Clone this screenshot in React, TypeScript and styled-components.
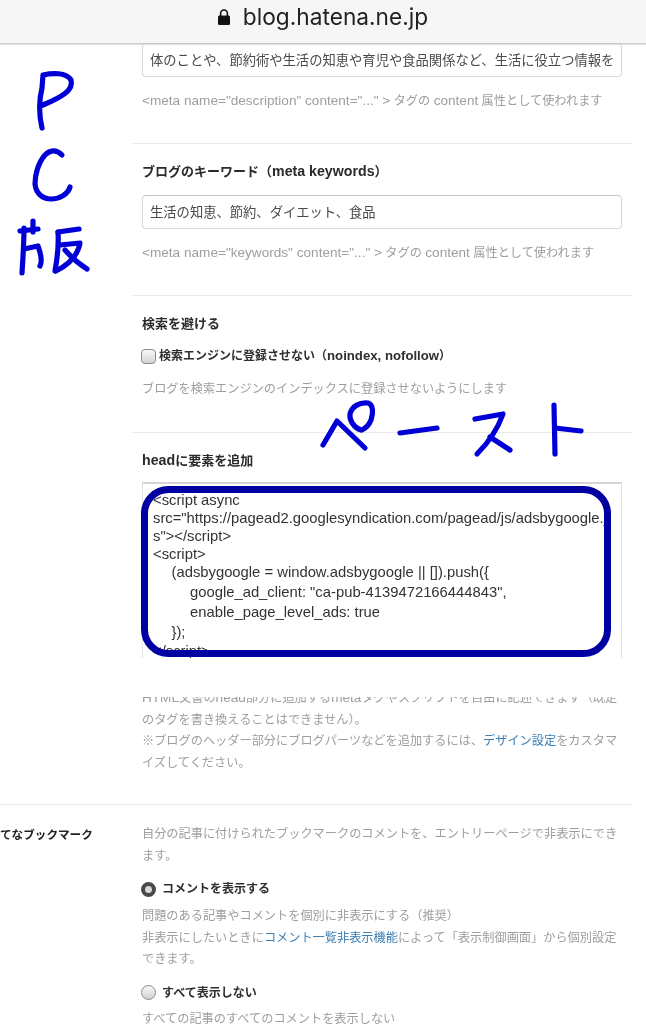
import React from "react";
import styled, { createGlobalStyle } from "styled-components";

const GlobalStyle = createGlobalStyle`
  html, body {
    margin: 0;
    padding: 0;
    background: #fff;
    overflow: hidden;
  }
  * {
    box-sizing: border-box;
  }
`;

const Page = styled.div`
  position: relative;
  width: 646px;
  height: 1024px;
  overflow: hidden;
  background: #fff;
  font-family: "Liberation Sans", "Noto Sans CJK JP", sans-serif;
  font-size: 12.2px;
  line-height: 21.5px;
  color: #9e9e9e;
  filter: blur(0.35px);
`;

const AddressBar = styled.header`
  height: 44px;
  display: flex;
  align-items: center;
  justify-content: center;
  gap: 13px;
  padding-bottom: 9px;
  background: #f6f6f6;
  border-bottom: 1px solid #cfcfcf;
  box-shadow: 0 1px 1px #e4e4e4;
`;

const Host = styled.span`
  font-family: "Inter", "Liberation Sans", sans-serif;
  font-size: 22.7px;
  line-height: 26px;
  color: #222;
`;

// latin runs are set larger than the kana around them
const Latin = styled.span<{ $size?: number }>`
  font-size: ${(p) => p.$size ?? 13.6}px;
  line-height: 0;
`;

const Section = styled.section`
  margin-left: 132px;
  width: 500px;
  padding: 18px 10px 32px;
  border-bottom: 1px solid #e9e9e9;
`;

const FirstSection = styled(Section)`
  padding-top: 0;
  margin-top: -1px;
`;

const SearchSection = styled(Section)`
  padding-bottom: 33px;
`;

const HeadSection = styled(Section)`
  padding-bottom: 31px;
  border-bottom: none;
`;

const Title = styled.h3`
  height: 18px;
  margin: 0;
  font-size: 13px;
  line-height: 20px;
  font-weight: 700;
  color: #2a2a2a;
`;

const Field = styled.div<{ $spaced?: boolean }>`
  height: 34px;
  margin-top: ${(p) => (p.$spaced ? "15px" : "0")};
  padding: 0 7px;
  border: 1px solid #d6d6d6;
  border-top-color: #c4c4c4;
  border-radius: 4px;
  font-family: "Noto Sans CJK JP", sans-serif;
  font-size: 13.3px;
  line-height: 31px;
  color: #4a4a4a;
  white-space: nowrap;
  overflow: hidden;
`;

const Hint = styled.p`
  height: 21px;
  margin: 13px 0 0;
  line-height: 23px;
  white-space: nowrap;
`;

const CheckRow = styled.label<{ $top: number }>`
  display: flex;
  align-items: center;
  height: 18px;
  margin-top: ${(p) => p.$top}px;
  font-size: 12px;
  line-height: 18px;
  font-weight: 700;
  color: #2f2f2f;
  white-space: pre;
`;

const Checkbox = styled.span`
  width: 15px;
  height: 15px;
  margin: 0 3px 0 -1px;
  border: 1px solid #8a8a8a;
  border-radius: 4px;
  background: linear-gradient(#f8f8f8, #d4d4d4);
`;

const Radio = styled.span<{ $checked?: boolean }>`
  width: 15px;
  height: 15px;
  margin: 0 6px 0 -1px;
  border-radius: 50%;
  border: ${(p) => (p.$checked ? "4px solid #4a4a4a" : "1px solid #8a8a8a")};
  background: ${(p) =>
    p.$checked ? "#d8d8d8" : "linear-gradient(#f8f8f8, #d2d2d2)"};
`;

const CodeBox = styled.div`
  height: 176px;
  margin-top: 13px;
  padding: 7px 0 0 10px;
  border: 1px solid #e2e2e2;
  border-top: 2px solid #d4d4d4;
  border-bottom: none;
  overflow: hidden;
  font-family: "Liberation Sans", "Noto Sans", sans-serif;
  font-size: 14.8px;
  color: #333;
`;

const CodeLine = styled.div<{ $indent?: number; $height?: number }>`
  height: ${(p) => p.$height ?? 18}px;
  line-height: ${(p) => p.$height ?? 18}px;
  padding-left: ${(p) => (p.$indent ?? 0) * 18.5}px;
  white-space: pre;
`;

const ClippedNote = styled.div`
  height: 76px;
  margin-top: 39px;
  overflow: hidden;
`;

const NoteBody = styled.p`
  margin: -9px 0 0;
`;

const Link = styled.a`
  color: #3c7fb4;
`;

const BookmarkSection = styled.section`
  display: grid;
  grid-template-columns: 142px 480px;
  padding-top: 19px;
`;

const BookmarkLabel = styled.div`
  font-size: 11.6px;
  font-weight: 700;
  color: #222;
  white-space: nowrap;
`;

const BookmarkBody = styled.div`
  min-width: 0;
`;

const Description = styled.p<{ $top: number }>`
  margin: ${(p) => p.$top}px 0 0;
`;

const Divider = styled.hr`
  height: 1px;
  width: 632px;
  margin: 0;
  border: none;
  background: #e9e9e9;
`;

const InkLayer = styled.svg`
  position: absolute;
  left: 0;
  top: 0;
  pointer-events: none;
`;

const inkStrokes = [
  // P
  "M42 128 C39 115 39 100 42 88 L43 75 C52 73 66 72 71 80 C74 90 62 97 43 105",
  // C
  "M62 155 C56 149 50 150 45 155 C38 163 35 175 35 184 C36 194 43 199 51 199 C60 199 68 194 70 187",
  // 版
  "M24 228 C24 242 23 258 22 273",
  "M20 231 L38 229",
  "M33 221 L33 232",
  "M24 249 L38 246 C41 254 42 262 40 266",
  "M58 232 L79 229",
  "M58 232 C59 246 57 260 55 271",
  "M60 245 L80 243 C78 254 70 264 56 271",
  "M65 250 C72 258 79 264 87 269",
  // ペ
  "M323 445 L337 421 L365 448",
  "M361 430 C354 428 349 420 350 414 C352 406 360 402 368 403 C374 405 373 414 371 420 C369 425 366 428 362 430",
  // ー
  "M400 433 L437 428",
  // ス
  "M475 419 L503 414 C498 428 488 443 477 454",
  "M490 437 L510 450",
  // ト
  "M554 405 L555 454",
  "M555 428 L581 431",
];

const Ink = () => (
  <InkLayer width="646" height="1024" viewBox="0 0 646 1024" aria-hidden="true">
    <rect
      x="144.5"
      y="489.5"
      width="463"
      height="164"
      rx="24"
      fill="none"
      stroke="#0000a2"
      strokeWidth="7"
    />
    {inkStrokes.map((d) => (
      <path
        key={d}
        d={d}
        fill="none"
        stroke="#0000d6"
        strokeWidth="5.2"
        strokeLinecap="round"
        strokeLinejoin="round"
      />
    ))}
  </InkLayer>
);

const LockIcon = () => (
  <svg width="12" height="16" viewBox="0 0 12 16">
    <path d="M2.6 7V4.4a3.4 3.4 0 0 1 6.8 0V7" fill="none" stroke="#111" strokeWidth="1.6" />
    <rect x="0" y="6.5" width="12" height="9.5" rx="1.5" fill="#111" />
  </svg>
);

export default function App() {
  return (
    <>
      <GlobalStyle />
      <Page>
        <AddressBar>
          <LockIcon />
          <Host>blog.hatena.ne.jp</Host>
        </AddressBar>

        <FirstSection>
          <Field>体のことや、節約術や生活の知恵や育児や食品関係など、生活に役立つ情報を</Field>
          <Hint>
            <Latin>&lt;meta name="description" content="..." &gt;</Latin> タグの <Latin>content</Latin> 属性として使われます
          </Hint>
        </FirstSection>

        <Section>
          <Title>
            ブログのキーワード（<Latin $size={14.2}>meta keywords</Latin>）
          </Title>
          <Field $spaced>生活の知恵、節約、ダイエット、食品</Field>
          <Hint>
            <Latin>&lt;meta name="keywords" content="..." &gt;</Latin> タグの <Latin>content</Latin> 属性として使われます
          </Hint>
        </Section>

        <SearchSection>
          <Title>検索を避ける</Title>
          <CheckRow $top={15}>
            <Checkbox />
            検索エンジンに登録させない（<Latin $size={13.2}>noindex, nofollow</Latin>）
          </CheckRow>
          <Hint>ブログを検索エンジンのインデックスに登録させないようにします</Hint>
        </SearchSection>

        <HeadSection>
          <Title>
            <Latin $size={14.2}>head</Latin>に要素を追加
          </Title>
          <CodeBox>
            <CodeLine>&lt;script async</CodeLine>
            <CodeLine>src="https://pagead2.googlesyndication.com/pagead/js/adsbygoogle.j</CodeLine>
            <CodeLine>s"&gt;&lt;/script&gt;</CodeLine>
            <CodeLine>&lt;script&gt;</CodeLine>
            <CodeLine $indent={1} $height={19}>(adsbygoogle = window.adsbygoogle || []).push({"{"}</CodeLine>
            <CodeLine $indent={2} $height={21}>google_ad_client: "ca-pub-4139472166444843",</CodeLine>
            <CodeLine $indent={2} $height={19}>enable_page_level_ads: true</CodeLine>
            <CodeLine $indent={1} $height={20}>{"});"}</CodeLine>
            <CodeLine>&lt;/script&gt;</CodeLine>
          </CodeBox>
          <ClippedNote>
            <NoteBody>
              <Latin>HTML</Latin>文書の<Latin>head</Latin>部分に追加する<Latin>meta</Latin>タグやスクリプトを自由に記述できます（既定のタグを書き換えることはできません）。
              <br />
              ※ブログのヘッダー部分にブログパーツなどを追加するには、<Link>デザイン設定</Link>をカスタマイズしてください。
            </NoteBody>
          </ClippedNote>
        </HeadSection>

        <Divider />

        <BookmarkSection>
          <BookmarkLabel>てなブックマーク</BookmarkLabel>
          <BookmarkBody>
            <Description $top={0}>
              自分の記事に付けられたブックマークのコメントを、エントリーページで非表示にできます。
            </Description>
            <CheckRow $top={13}>
              <Radio $checked />
              コメントを表示する
            </CheckRow>
            <Description $top={8}>
              問題のある記事やコメントを個別に非表示にする（推奨）
              <br />
              非表示にしたいときに<Link>コメント一覧非表示機能</Link>によって「表示制御画面」から個別設定できます。
            </Description>
            <CheckRow $top={13}>
              <Radio />
              すべて表示しない
            </CheckRow>
            <Description $top={7}>すべての記事のすべてのコメントを表示しない</Description>
          </BookmarkBody>
        </BookmarkSection>

        <Ink />
      </Page>
    </>
  );
}
